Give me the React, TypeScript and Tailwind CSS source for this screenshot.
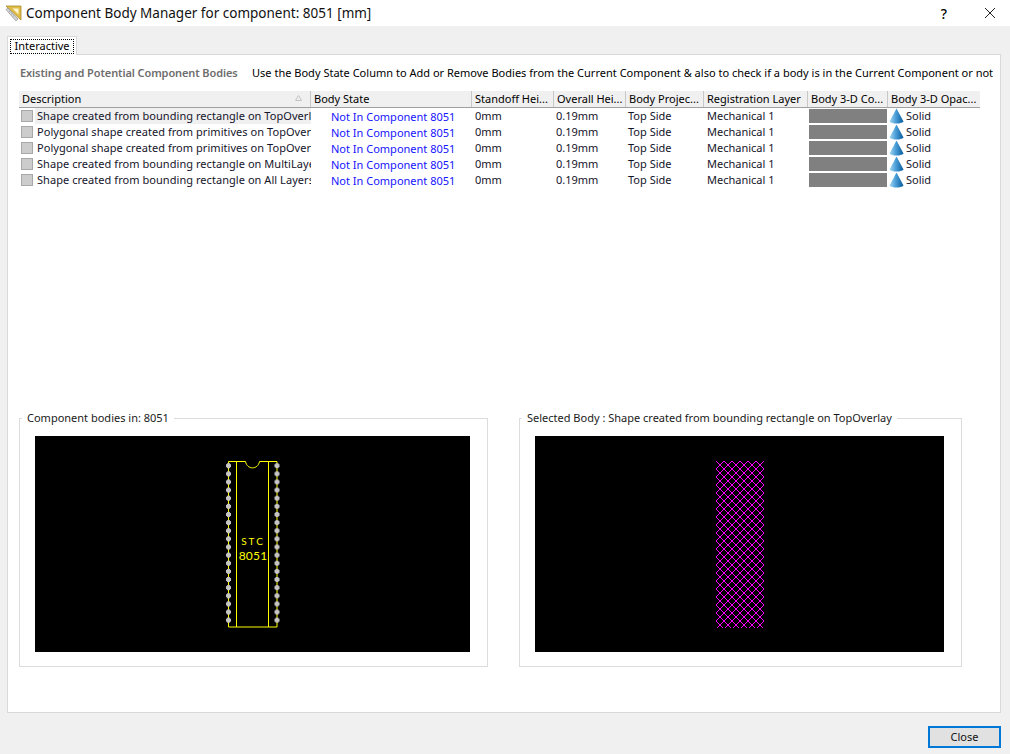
const bodies = [
  'Shape created from bounding rectangle on TopOverlay',
  'Polygonal shape created from primitives on TopOverlay',
  'Polygonal shape created from primitives on TopOverlay',
  'Shape created from bounding rectangle on MultiLayer',
  'Shape created from bounding rectangle on All Layers',
];

const columns = [
  { label: 'Description', width: 'w-[292px]' },
  { label: 'Body State', width: 'w-[161px]' },
  { label: 'Standoff Hei...', width: 'w-[82px]' },
  { label: 'Overall Hei...', width: 'w-[72px]' },
  { label: 'Body Projec...', width: 'w-[78px]' },
  { label: 'Registration Layer', width: 'w-[104px]' },
  { label: 'Body 3-D Co...', width: 'w-[80px]' },
  { label: 'Body 3-D Opac...', width: 'w-[92px]' },
];

// set square + ruler in the title bar
function AppIcon() {
  return (
    <svg width="17" height="17" viewBox="0 0 17 17" className="shrink-0">
      <path d="M1 1H16V15Z" fill="#e0bd45" stroke="#a98a2c" strokeWidth="0.8" />
      <path d="M7.5 3.5H13.5V9.5Z" fill="#fff6cf" />
      <path d="M1 4.5L3 3L13 14L11 16Z" fill="#d6d6d6" stroke="#8f8f8f" strokeWidth="0.7" />
      <path d="M4 7L5.2 6M6 9.2L7.2 8.2M8 11.4L9.2 10.4" stroke="#8f8f8f" strokeWidth="0.7" />
    </svg>
  );
}

function Cone({ id }: { id: string }) {
  return (
    <svg width="15" height="16" viewBox="0 0 15 16" className="shrink-0">
      <defs>
        <linearGradient id={id} x1="0" x2="1" y1="0" y2="0">
          <stop offset="0" stopColor="#a9d6f0" />
          <stop offset="0.45" stopColor="#4a9fd8" />
          <stop offset="1" stopColor="#0a5a9a" />
        </linearGradient>
      </defs>
      <path d="M7.5 0.5L14.5 13.5C12 16.3 3 16.3 0.5 13.5Z" fill={`url(#${id})`} />
    </svg>
  );
}

function ComponentPreview() {
  const pads = Array.from({ length: 20 }, (_, i) => 29.7 + i * 8.13);
  return (
    <svg viewBox="0 0 435 216" className="block h-[216px] w-[435px] bg-black">
      <path
        d="M193.5 25.5H210.5C212 34 223 34 224.5 25.5H242V191H193.5Z"
        fill="none"
        stroke="#ffff00"
        strokeWidth="1"
      />
      <path d="M201.5 25.5V191M233.5 25.5V191" stroke="#ffff00" strokeWidth="1" />
      {pads.map((y) => (
        <g key={y} fill="#c4c4c4">
          <rect x="192" y={y - 2.5} width="3" height="5" />
          <rect x="191" y={y - 1.5} width="5" height="3" />
          <rect x="240.5" y={y - 2.5} width="3" height="5" />
          <rect x="239.5" y={y - 1.5} width="5" height="3" />
        </g>
      ))}
      <text x="218" y="109" textAnchor="middle" fill="#ffff00" fontSize="10" letterSpacing="2" fontFamily="Lato, sans-serif">STC</text>
      <text x="218" y="124" textAnchor="middle" fill="#ffff00" fontSize="12" letterSpacing="0.2" fontFamily="Lato, sans-serif">8051</text>
    </svg>
  );
}

function SelectedPreview() {
  const steps = [0, 1, 2, 3, 4, 5, 6, 7];
  return (
    <svg viewBox="0 0 409 216" className="block h-[216px] w-[409px] bg-black" shapeRendering="crispEdges">
      <defs>
        <pattern id="hatch" x="181" y="25" width="8" height="8" patternUnits="userSpaceOnUse">
          {steps.map((i) => (
            <g key={i} fill="#ff00ff">
              <rect x={i} y={i} width="1" height="1" />
              <rect x={7 - i} y={i} width="1" height="1" />
            </g>
          ))}
        </pattern>
      </defs>
      <rect x="181" y="25" width="48" height="167" fill="url(#hatch)" />
    </svg>
  );
}

function GroupBox({ title, width, children }: { title: string; width: string; children: React.ReactNode }) {
  return (
    <fieldset className={`${width} h-[257px] border border-[#dcdcdc] pl-[15px] pt-[10px]`}>
      <legend className="ml-[-13px] px-[5px] leading-[16px] text-[#1a1a1a]">{title}</legend>
      {children}
    </fieldset>
  );
}

export default function App() {
  return (
    <div className="flex h-[754px] w-[1010px] flex-col overflow-hidden bg-[#f0f0f0] text-[11px] text-black [font-family:'Noto_Sans',sans-serif]">
      <div className="flex h-[26px] shrink-0 items-center bg-white pl-[5px]">
        <AppIcon />
        <span className="ml-[4px] text-[13.5px] text-[#111]">Component Body Manager for component: 8051 [mm]</span>
        <span className="ml-auto mr-[37px] text-[14px] font-medium">?</span>
        <svg width="12" height="12" viewBox="0 0 12 12" className="mr-[14px]">
          <path d="M1 1L11 11M11 1L1 11" stroke="#222" strokeWidth="1" />
        </svg>
      </div>

      <div className="flex-1 px-[7px]">
        <div className="relative z-10 mt-[10px] h-[19px] w-[70px] border border-b-0 border-[#d9d9d9] bg-white px-[2px] pt-[2px]">
          <div className="flex h-[15px] items-center justify-center border border-dotted border-black pb-[2px] leading-none">Interactive</div>
        </div>
        <div className="-mt-px h-[659px] w-[994px] border border-[#d9d9d9] bg-white pl-[11px]">
          <div className="flex h-[36px] items-center whitespace-nowrap pl-[1px]">
            <span className="w-[232px] font-semibold tracking-[-0.1px] text-[#6d6d6d]">Existing and Potential Component Bodies</span>
            <span className="tracking-[0.01px]">Use the Body State Column to Add or Remove Bodies from the Current Component &amp; also to check if a body is in the Current Component or not</span>
          </div>

          <div className="w-[961px]">
            <div className="flex h-[17px] border-b border-[#a0a0a0] bg-[#f0f0f0]">
              {columns.map((col, i) => (
                <div key={col.label} className={`${col.width} relative flex items-center truncate whitespace-nowrap pl-[3px] ${i < columns.length - 1 ? 'border-r border-[#c8c8c8]' : ''}`}>
                  {col.label}
                  {i === 0 && (
                    <svg width="7" height="6" viewBox="0 0 7 6" className="absolute right-[8px] top-[4px]">
                      <path d="M3.5 0.5L6.5 5.5H0.5Z" fill="none" stroke="#c4c4c4" />
                    </svg>
                  )}
                </div>
              ))}
            </div>

            {bodies.map((body, i) => (
              <div key={i} className="flex h-[16px] items-center whitespace-nowrap text-[#14142a]">
                <div className="flex w-[292px] items-center pl-[2px]">
                  <span className="h-[12px] w-[12px] shrink-0 border border-[#a8a8a8] bg-[#cccccc]" />
                  <span className={`ml-[2px] w-[276px] overflow-hidden pl-[2px] tracking-[0.05px] ${i === 0 ? 'bg-[#f0f0f0]' : ''}`}>{body}</span>
                </div>
                <div className="w-[161px] pl-[20px] pt-[2px] text-[#1414ff]">Not In Component 8051</div>
                <div className="w-[82px] pl-[3px]">0mm</div>
                <div className="w-[72px] pl-[2px]">0.19mm</div>
                <div className="w-[78px] pl-[2px]">Top Side</div>
                <div className="w-[104px] pl-[3px]">Mechanical 1</div>
                <div className="w-[80px] pl-[1px]"><div className="h-[14px] w-[78px] bg-[#808080]" /></div>
                <div className="flex w-[92px] items-center pl-[1px]">
                  <Cone id={`cone${i}`} />
                  <span className="ml-[2px]">Solid</span>
                </div>
              </div>
            ))}
          </div>

          <div className="mt-[222px] flex gap-[31px]">
            <GroupBox title="Component bodies in: 8051" width="w-[469px]">
              <ComponentPreview />
            </GroupBox>
            <GroupBox title="Selected Body : Shape created from bounding rectangle on TopOverlay" width="w-[443px]">
              <SelectedPreview />
            </GroupBox>
          </div>
        </div>
      </div>

      <div className="flex h-[42px] shrink-0 items-start justify-end pr-[9px] pt-[13px]">
        <button className="h-[22px] w-[73px] border-2 border-[#0078d7] bg-[#e1e1e1] pb-px leading-none text-[#111]">Close</button>
      </div>
    </div>
  );
}
